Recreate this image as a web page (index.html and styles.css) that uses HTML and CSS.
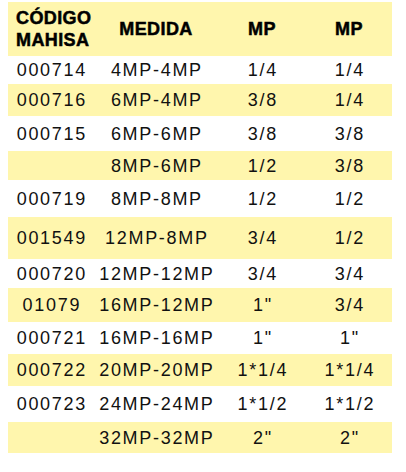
FILE: index.html
```html
<!DOCTYPE html>
<html lang="es">
<head>
<meta charset="utf-8">
<title>Tabla MAHISA</title>
<link rel="stylesheet" href="styles.css">
</head>
<body>
<div class="table">
  <div class="row head y">
    <div class="cell code">CÓDIGO<br>MAHISA</div>
    <div class="cell">MEDIDA</div>
    <div class="cell">MP</div>
    <div class="cell">MP</div>
  </div>
  <div class="row r1"><div class="cell">000714</div><div class="cell">4MP-4MP</div><div class="cell">1/4</div><div class="cell">1/4</div></div>
  <div class="row r2 y"><div class="cell">000716</div><div class="cell">6MP-4MP</div><div class="cell">3/8</div><div class="cell">1/4</div></div>
  <div class="row r3"><div class="cell">000715</div><div class="cell">6MP-6MP</div><div class="cell">3/8</div><div class="cell">3/8</div></div>
  <div class="row r4 y"><div class="cell"></div><div class="cell">8MP-6MP</div><div class="cell">1/2</div><div class="cell">3/8</div></div>
  <div class="row r5"><div class="cell">000719</div><div class="cell">8MP-8MP</div><div class="cell">1/2</div><div class="cell">1/2</div></div>
  <div class="row r6 y"><div class="cell">001549</div><div class="cell">12MP-8MP</div><div class="cell">3/4</div><div class="cell">1/2</div></div>
  <div class="row r7"><div class="cell">000720</div><div class="cell">12MP-12MP</div><div class="cell">3/4</div><div class="cell">3/4</div></div>
  <div class="row r8 y"><div class="cell">01079</div><div class="cell">16MP-12MP</div><div class="cell">1"</div><div class="cell">3/4</div></div>
  <div class="row r9"><div class="cell">000721</div><div class="cell">16MP-16MP</div><div class="cell">1"</div><div class="cell">1"</div></div>
  <div class="row r10 y"><div class="cell">000722</div><div class="cell">20MP-20MP</div><div class="cell">1*1/4</div><div class="cell">1*1/4</div></div>
  <div class="row r11"><div class="cell">000723</div><div class="cell">24MP-24MP</div><div class="cell">1*1/2</div><div class="cell">1*1/2</div></div>
  <div class="row r12 y"><div class="cell"></div><div class="cell">32MP-32MP</div><div class="cell">2"</div><div class="cell">2"</div></div>
</div>
</body>
</html>
```

FILE: styles.css
```css
html, body {
  margin: 0;
  padding: 0;
  background: #ffffff;
}

body {
  font-family: "Liberation Sans", Arial, sans-serif;
  color: #111111;
}

.table {
  margin: 2px 0 0 8px;
  width: 384px;
  display: flex;
  flex-direction: column;
}

.row {
  display: grid;
  grid-template-columns: 86px 124px 88px 86px;
  align-items: center;
  font-size: 18px;
  line-height: 20px;
  letter-spacing: 1.7px;
}

.row.y {
  background: #fff6ad;
}

.cell {
  text-align: center;
  white-space: nowrap;
  padding-left: 1.7px;
}

.head {
  height: 54px;
  font-weight: bold;
  letter-spacing: 0.4px;
  color: #000000;
  -webkit-text-stroke: 0.5px #000000;
}

.head .cell {
  padding-left: 0;
}

.head .code {
  text-align: left;
  padding-left: 8px;
  line-height: 22px;
}

.r1 { height: 28px; }
.r2 { height: 32px; }
.r3 { height: 35px; }
.r4 { height: 29px; }
.r5 { height: 37px; }
.r6 { height: 42px; }
.r7 { height: 29px; }
.r8 { height: 34px; }
.r9 { height: 32px; }
.r10 { height: 32px; }
.r11 { height: 36px; }
.r12 { height: 31px; }
```
